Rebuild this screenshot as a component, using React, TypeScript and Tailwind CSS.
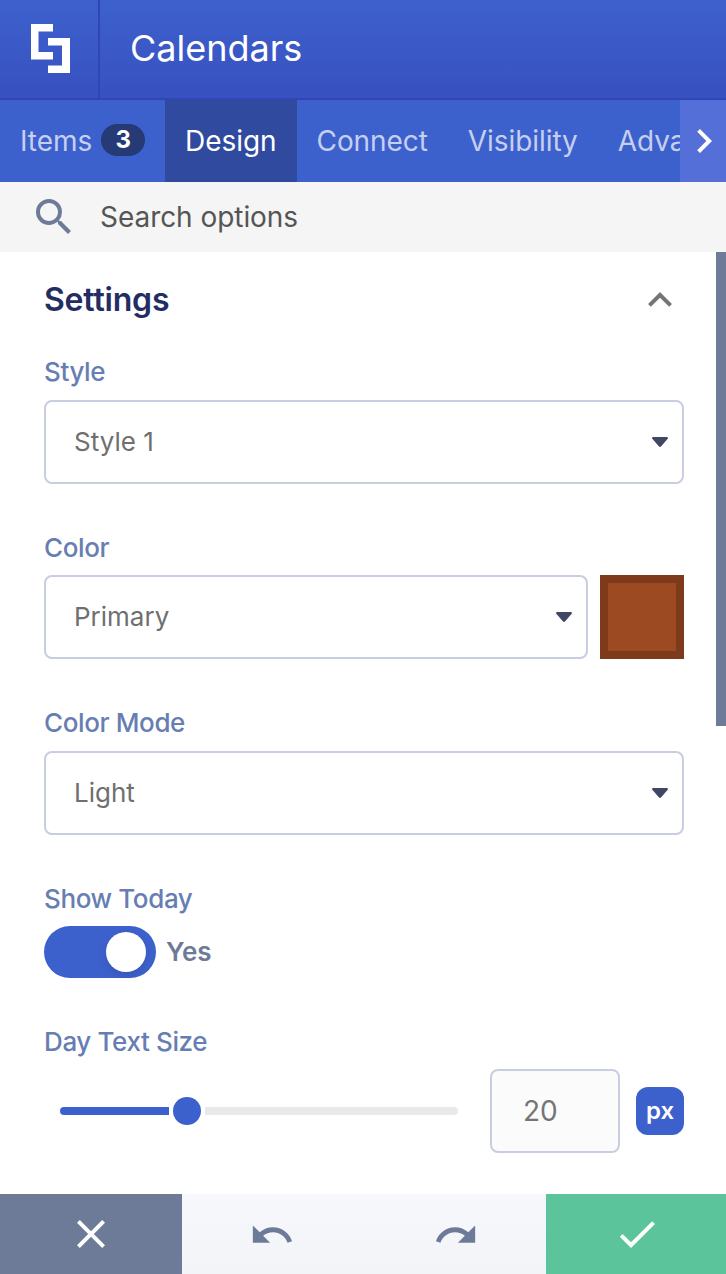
import type { ReactNode } from "react";

function Icon({ d, className = "" }: { d: string; className?: string }) {
  return (
    <svg viewBox="0 0 24 24" fill="currentColor" className={`shrink-0 ${className}`}>
      <path d={d} />
    </svg>
  );
}

const icons = {
  search:
    "M15.5 14h-.79l-.28-.27A6.471 6.471 0 0 0 16 9.5 6.5 6.5 0 1 0 9.5 16c1.61 0 3.09-.59 4.23-1.57l.27.28v.79l5 4.99L20.49 19l-4.99-5zm-6 0C7.01 14 5 11.99 5 9.5S7.01 5 9.5 5 14 7.01 14 9.5 11.99 14 9.5 14z",
  up: "M12 8l-6 6 1.41 1.41L12 10.83l4.59 4.58L18 14z",
  right: "M10 6L8.59 7.41 13.17 12l-4.58 4.59L10 18l6-6z",
  close:
    "M19 6.41L17.59 5 12 10.59 6.41 5 5 6.41 10.59 12 5 17.59 6.41 19 12 13.41 17.59 19 19 17.59 13.41 12z",
  undo: "M12.5 8c-2.65 0-5.05.99-6.9 2.6L2 7v9h9l-3.62-3.62c1.39-1.16 3.16-1.88 5.12-1.88 3.54 0 6.55 2.31 7.6 5.5l2.37-.78C21.08 11.03 17.15 8 12.5 8z",
  redo: "M18.4 10.6C16.55 8.99 14.15 8 11.5 8c-4.65 0-8.58 3.03-9.96 7.22L3.9 16c1.05-3.19 4.05-5.5 7.6-5.5 1.95 0 3.73.72 5.12 1.88L13 16h9V7l-3.6 3.6z",
  check: "M9 16.17L4.83 12l-1.42 1.41L9 19 21 7l-1.41-1.41z",
};

function Label({ children }: { children: ReactNode }) {
  return (
    <div className="h-8 text-[26px] leading-8 font-medium tracking-[-0.38px] whitespace-nowrap text-[#667eb2]">
      {children}
    </div>
  );
}

function Select({ value }: { value: string }) {
  return (
    <button className="flex h-[84px] w-full items-center justify-between rounded-lg border-2 border-[#c9cde0] bg-white pr-[14px] pl-7 text-[26px] text-[#6f6f6f]">
      <span className="pb-0.5">{value}</span>
      <svg viewBox="0 0 16 10" className="h-[10px] w-4" fill="#3f4863">
        <path d="M1.3 0H14.7C15.8 0 16.3 1.3 15.5 2.1L9.2 9.3C8.5 10.1 7.5 10.1 6.8 9.3L.5 2.1C-.3 1.3.2 0 1.3 0z" />
      </svg>
    </button>
  );
}

function Tab({ children, active = false }: { children: ReactNode; active?: boolean }) {
  return (
    <button
      className={`flex h-full shrink-0 items-center px-5 text-[28px] tracking-[-0.07px] ${
        active ? "bg-[#2f4a9f] text-white" : "text-[#c5cff0]"
      }`}
    >
      {children}
    </button>
  );
}

export default function App() {
  return (
    <div className="flex h-[1274px] w-[726px] flex-col overflow-hidden bg-white font-['Inter',sans-serif]">
      <header className="flex h-[100px] shrink-0 border-b-2 border-[#3047b3] bg-linear-to-b from-[#3d61cc] to-[#3850c1]">
        <div className="flex w-[100px] items-center border-r-2 border-[#3047b3] pb-[2px] pl-[31px]">
          <svg viewBox="0 0 39 49" className="h-[49px] w-[39px]" fill="#fff">
            <path d="M0 0h22v7.5H7.5v20.5H22v7.5H0z" />
            <path d="M17 14h22v35H17v-7.5h14V21.5H17z" />
          </svg>
        </div>
        <h1 className="flex items-center pb-0.5 pl-[30px] text-[36px] font-normal text-white">
          Calendars
        </h1>
      </header>

      <nav className="flex h-[82px] shrink-0 bg-[#3d61cc]">
        <div className="flex min-w-0 flex-1 overflow-hidden">
          <Tab>
            Items
            <span className="ml-[9px] flex h-8 w-11 -translate-y-px items-center justify-center rounded-full bg-[#263a75] text-2xl font-bold text-white">
              3
            </span>
          </Tab>
          <Tab active>Design</Tab>
          <Tab>Connect</Tab>
          <Tab>Visibility</Tab>
          <Tab>Advanced</Tab>
        </div>
        <button className="flex w-[46px] shrink-0 items-center bg-[#546fd7] text-white">
          <Icon d={icons.right} className="size-12" />
        </button>
      </nav>

      <div className="flex h-[70px] shrink-0 items-center bg-[#f5f5f5] pl-[30px]">
        <Icon d={icons.search} className="size-12 text-[#6d7b98]" />
        <span className="pl-[22px] text-[28px] tracking-[-0.05px] text-[#555]">Search options</span>
      </div>

      <div className="flex min-h-0 flex-1">
        <main className="w-[716px] pr-8 pl-11">
          <div className="flex h-24 items-center justify-between">
            <h2 className="text-[32px] font-semibold tracking-[-0.2px] text-[#232d63]">Settings</h2>
            <Icon d={icons.up} className="size-12 text-[#757575]" />
          </div>

          <section className="pt-2">
            <Label>Style</Label>
            <div className="pt-3">
              <Select value="Style 1" />
            </div>
          </section>

          <section className="pt-12">
            <Label>Color</Label>
            <div className="flex gap-3 pt-[11px]">
              <Select value="Primary" />
              <div className="size-[84px] shrink-0 border-8 border-[#7e3b1b] bg-[#9c4a22]" />
            </div>
          </section>

          <section className="pt-12">
            <Label>Color Mode</Label>
            <div className="pt-3">
              <Select value="Light" />
            </div>
          </section>

          <section className="pt-12">
            <Label>Show Today</Label>
            <div className="flex items-center gap-[10px] pt-[11px]">
              <div className="flex h-[52px] w-28 items-center justify-end rounded-full bg-[#3d61cc] pr-[10px]">
                <div className="size-10 rounded-full bg-white shadow-[0_4px_8px_rgba(0,0,0,0.1)]" />
              </div>
              <span className="pb-0.5 text-[26px] font-semibold text-[#6d7b98]">Yes</span>
            </div>
          </section>

          <section className="pt-12">
            <Label>Day Text Size</Label>
            <div className="flex items-center pt-[11px]">
              <div className="ml-4 flex h-9 w-[398px] items-center">
                <div className="h-2 w-[109px] rounded-l-full bg-[#3d61cc]" />
                <div className="mr-1 ml-1 size-7 rounded-full bg-[#3d61cc]" />
                <div className="h-2 flex-1 rounded-r-full bg-[#e9e9e9]" />
              </div>
              <div className="ml-8 flex h-[84px] w-[130px] items-center rounded-lg border-2 border-[#c9cde0] bg-[#fbfbfb] pl-[31px] text-[28px] text-[#757575]">
                20
              </div>
              <div className="ml-4 flex size-12 items-center justify-center rounded-xl bg-[#3d61cc] text-2xl font-semibold text-white">
                px
              </div>
            </div>
          </section>
        </main>
        <div className="h-[474px] w-[10px] shrink-0 bg-[#6d7b98]" />
      </div>

      <footer className="flex h-20 shrink-0 bg-linear-to-b from-[#f7f8fc] to-[#f3f4f8]">
        <button className="flex w-[182px] items-center justify-center bg-[#6d7b98] text-white">
          <Icon d={icons.close} className="size-12" />
        </button>
        <button className="flex w-[182px] items-center justify-center pt-0.5 pr-0.5 text-[#6d7b98]">
          <Icon d={icons.undo} className="size-[46px]" />
        </button>
        <button className="flex w-[182px] items-center justify-center pt-0.5 pl-0.5 text-[#6d7b98]">
          <Icon d={icons.redo} className="size-[46px]" />
        </button>
        <button className="flex w-[180px] items-center justify-center bg-[#5bc49a] pl-0.5 text-white">
          <Icon d={icons.check} className="size-12" />
        </button>
      </footer>
    </div>
  );
}
